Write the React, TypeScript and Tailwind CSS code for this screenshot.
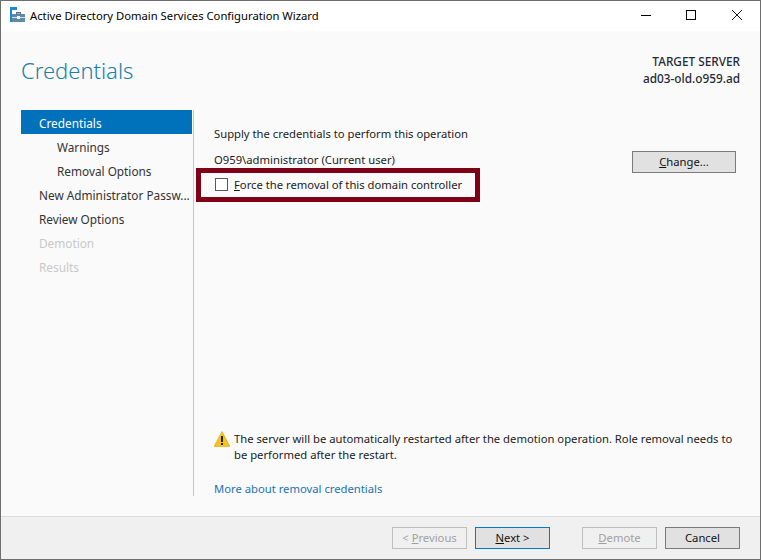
const font = { fontFamily: '"Noto Sans", "Open Sans", sans-serif' };

const steps = [
  { label: "Credentials", active: true },
  { label: "Warnings", sub: true },
  { label: "Removal Options", sub: true },
  { label: "New Administrator Passw..." },
  { label: "Review Options" },
  { label: "Demotion", off: true },
  { label: "Results", off: true },
];

function WizardIcon() {
  return (
    <svg width="15" height="16" viewBox="0 0 15 16" className="mb-[2px]">
      <rect x="0" y="0" width="7" height="3" fill="#1e88d8" />
      <rect x="0" y="3" width="2" height="12" fill="#1e88d8" />
      <rect x="2" y="7" width="13" height="8" fill="#5e8aa8" />
      <rect x="6.5" y="5.5" width="4" height="1.5" fill="none" stroke="#5a6f80" strokeWidth="1" />
      <rect x="2" y="10" width="13" height="1" fill="#d5e3ec" />
      <rect x="7" y="9" width="3" height="3" fill="#eef4f8" />
    </svg>
  );
}

function Btn({ label, disabled, primary, wide }: { label: React.ReactNode; disabled?: boolean; primary?: boolean; wide?: boolean }) {
  return (
    <button
      className={`h-[22px] shrink-0 ${wide ? "w-[104px]" : "w-[75px]"} border text-[11.25px] leading-none ${
        disabled
          ? "border-[#bfbfbf] bg-[#f0f0f0] text-[#a0a0a0]"
          : primary
            ? "border-[#0078d7] bg-[#e1e1e1] text-[#111]"
            : "border-[#7a7a7a] bg-[#e1e1e1] text-[#111]"
      }`}
    >
      {label}
    </button>
  );
}

export default function App() {
  return (
    <div style={font} className="relative flex h-[560px] w-[761px] flex-col overflow-hidden border border-[#6e6e6e] bg-[#fafafa] text-[11.25px] text-[#1c1c1c]">
      <div className="flex h-[30px] shrink-0 items-center bg-white pl-[9px]">
        <WizardIcon />
        <span className="ml-[5px] text-black">Active Directory Domain Services Configuration Wizard</span>
        <div className="ml-auto flex items-center pb-[2px] pr-[18px]">
          <svg width="10" height="10" viewBox="0 0 10 10" className="mr-[35px]">
            <path d="M0 5.5H10" stroke="#000" />
          </svg>
          <svg width="10" height="10" viewBox="0 0 10 10" className="mr-[36px]">
            <rect x="0.5" y="0.5" width="9" height="9" fill="none" stroke="#000" />
          </svg>
          <svg width="10" height="10" viewBox="0 0 10 10">
            <path d="M0 0L10 10M10 0L0 10" stroke="#000" strokeWidth="0.9" />
          </svg>
        </div>
      </div>

      <div className="flex h-[79px] shrink-0 justify-between pl-[20px] pr-[20px] pt-[19px]">
        <div className="text-[22px] font-light leading-[40px] text-[#1b7fa8]">Credentials</div>
        <div className="pt-[3px] text-right text-[11.8px] font-medium leading-[17px] text-[#1f2a36]">
          <div>TARGET SERVER</div>
          <div>ad03-old.o959.ad</div>
        </div>
      </div>

      <div className="flex min-h-0 flex-1 pl-[20px]">
        <div className="w-[171px] shrink-0 text-[11.8px]">
          {steps.map((s) => (
            <div
              key={s.label}
              className={`h-[24px] overflow-hidden whitespace-nowrap leading-[26px] ${s.sub ? "pl-[36px]" : "pl-[18px]"} ${
                s.active ? "bg-[#0072bc] text-white" : s.off ? "text-[#c8c8c8]" : "text-[#333]"
              }`}
            >
              {s.label}
            </div>
          ))}
        </div>

        <div className="mb-[20px] ml-[1px] w-px bg-[#c8c8c8]" />

        <div className="flex flex-1 flex-col pb-[19px] pl-[20px] pr-[24px]">
          <div className="mt-[15px] leading-[17px]">Supply the credentials to perform this operation</div>
          <div className="mt-[9px] flex items-start justify-between">
            <span className="leading-[17px]">O959\administrator (Current user)</span>
            <Btn wide label={<><u>C</u>hange...</>} />
          </div>
          <div className="mt-[3px] flex items-center">
            <span className="ml-[1px] h-[13px] w-[13px] border border-[#5a5a5a] bg-white" />
            <span className="ml-[6px] pt-[1px]"><u>F</u>orce the removal of this domain controller</span>
          </div>

          <div className="mt-auto flex items-start">
            <svg width="16" height="16" viewBox="0 0 16 16" className="shrink-0">
              <path d="M8 .5 L16 15.5 H0 Z" fill="#f6c21c" stroke="#d99a00" strokeWidth="0.5" />
              <rect x="7" y="5" width="2" height="6" fill="#222" />
              <rect x="7" y="12" width="2" height="2" fill="#222" />
            </svg>
            <p className="ml-[4px] leading-[16px]">
              The server will be automatically restarted after the demotion operation. Role removal needs to be performed after the restart.
            </p>
          </div>
          <a className="mt-[17px] leading-[17px] text-[#1a73b5]">More about removal credentials</a>
        </div>
      </div>

      <div className="flex h-[43px] shrink-0 items-center border-t border-[#dcdcdc] bg-[#f0f0f0] pl-[391px]">
        <Btn disabled label={<>&lt; <u>P</u>revious</>} />
        <span className="w-[8px]" />
        <Btn primary label={<><u>N</u>ext &gt;</>} />
        <span className="w-[32px]" />
        <Btn disabled label={<><u>D</u>emote</>} />
        <span className="w-[8px]" />
        <Btn label="Cancel" />
      </div>

      <div className="absolute left-[195px] top-[167px] h-[34px] w-[284px] border-[5px] border-[#800018]" />
    </div>
  );
}
